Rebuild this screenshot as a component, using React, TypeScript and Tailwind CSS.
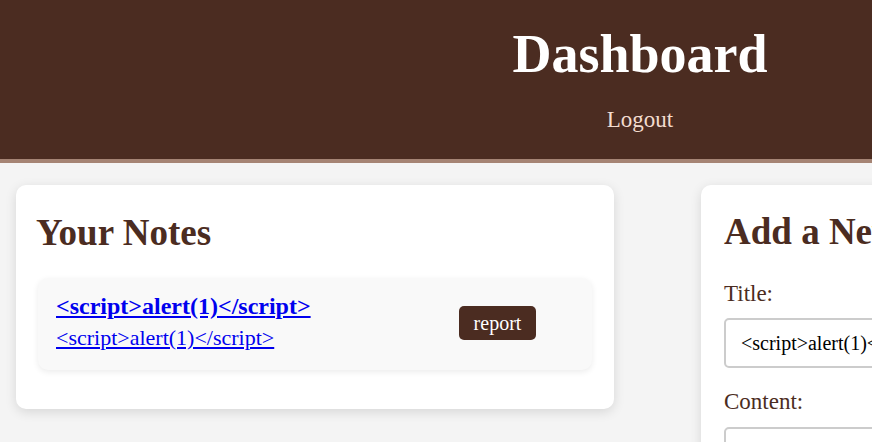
import React from 'react';

type Note = {
    id: number;
    title: string;
    content: string;
};

const notes: Note[] = [
    { id: 1, title: '<script>alert(1)</script>', content: '<script>alert(1)</script>' },
];

export default function App() {
    return (
        <div className="min-h-screen overflow-hidden bg-[#f4f4f4] font-['Liberation_Serif',serif]">
            <div className="w-[1280px]">
                {/* Header */}
                <header className="h-[163px] border-b-4 border-[#a58474] bg-[#4b2c21] pt-[27px] text-center">
                    <h1 className="text-[54px] font-bold leading-[54px] text-white">Dashboard</h1>
                    <a href="#" className="mt-[27px] block text-[23px] leading-[23px] text-[#f3dccf]">
                        Logout
                    </a>
                </header>

                {/* Main */}
                <main className="flex items-start pt-[22px]">
                    <section className="ml-4 w-[598px] rounded-[10px] bg-white p-5 shadow-[0_3px_12px_rgba(0,0,0,0.12)]">
                        <h2 className="mt-[9px] text-[37px] font-bold leading-[37px] text-[#4b2c21]">Your Notes</h2>
                        {notes.map(note => (
                            <div
                                key={note.id}
                                className="mt-[27px] mb-[19px] ml-[2px] mr-[2px] flex items-center rounded-[10px] bg-[#f9f9f9] pt-4 pr-[56px] pb-[21px] pl-[18px] shadow-[0_2px_6px_rgba(0,0,0,0.08)]"
                            >
                                <div className="flex-1">
                                    <a href="#" className="block text-[24px] font-bold leading-[24px] text-[#0000ee] underline">
                                        {note.title}
                                    </a>
                                    <a href="#" className="mt-[9px] block text-[22px] leading-[22px] text-[#0000ee] underline">
                                        {note.content}
                                    </a>
                                </div>
                                <button
                                    type="button"
                                    className="mt-[3px] h-[34px] w-[77px] rounded-[5px] bg-[#4b2c21] text-[20px] leading-[20px] text-white"
                                >
                                    report
                                </button>
                            </div>
                        ))}
                    </section>

                    <section className="ml-[87px] w-[563px] rounded-[10px] bg-white px-[23px] pt-5 pb-8 shadow-[0_3px_12px_rgba(0,0,0,0.12)]">
                        <h2 className="mt-2 text-[37px] font-bold leading-[37px] text-[#4b2c21]">Add a New Note</h2>
                        <label className="mt-8 block text-[23px] leading-[23px] text-[#4b2c21]">Title:</label>
                        <input
                            type="text"
                            defaultValue="<script>alert(1)</script>"
                            className="mt-[13px] block h-[50px] w-full rounded-[5px] border-2 border-[#cccccc] px-[15px] text-[20px] text-black outline-none"
                        />
                        <label className="mt-[22px] block text-[23px] leading-[23px] text-[#4b2c21]">Content:</label>
                        <textarea
                            defaultValue="<script>alert(1)</script>"
                            className="mt-[14px] block h-[120px] w-full rounded-[5px] border-2 border-[#cccccc] px-[15px] py-3 text-[20px] text-black outline-none"
                        />
                    </section>
                </main>
            </div>
        </div>
    );
}
